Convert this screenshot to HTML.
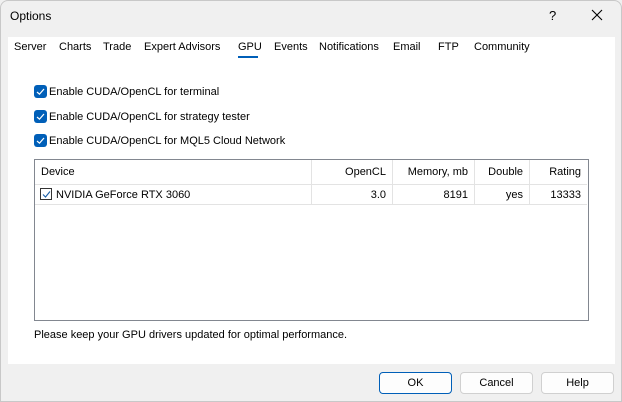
<!DOCTYPE html>
<html><head><style>
*{margin:0;padding:0;box-sizing:border-box}
body{width:622px;height:402px;overflow:hidden;background:#f0f0f0;font-family:"Liberation Sans",sans-serif;font-size:11px;color:#000;position:relative}
.abs{position:absolute;white-space:nowrap}
.win{position:absolute;left:0;top:0;width:622px;height:402px;border:1px solid #c8c8c8;border-radius:8px 8px 0 0;background:#f0f0f0}
.panel{position:absolute;left:8px;top:37px;width:607px;height:327px;background:#fff}
.cb{position:absolute;width:13px;height:13px;background:#005fb8;border-radius:3px}
.cb svg{position:absolute;left:2px;top:2px}
.list{position:absolute;left:34px;top:159px;width:555px;height:162px;border:1px solid #828790;background:#fff}
.hdr{position:absolute;top:0;height:24px;border-right:1px solid #e3e3e3;line-height:24px;padding:0 6px}
.row{position:absolute;top:24px;height:21px;line-height:21px;border-right:1px solid #e3e3e3;border-top:1px solid #e3e3e3;border-bottom:1px solid #e3e3e3;padding:0 6px}
.btn{position:absolute;top:372px;width:73px;height:22px;border:1px solid #d0d0d0;border-radius:4px;background:#fdfdfd;text-align:center;line-height:20px}
</style></head><body>
<div class="win"></div>
<div class="abs" style="left:10px;top:9px;font-size:12px">Options</div>
<div class="abs" style="left:549px;top:8px;font-size:13px">?</div>
<svg class="abs" style="left:591px;top:9px" width="12" height="12"><path d="M1 1L11 11M11 1L1 11" stroke="#000" stroke-width="1.1"/></svg>
<div class="panel"></div>
<div class="abs" style="left:14px;top:41px">Server</div>
<div class="abs" style="left:59px;top:41px">Charts</div>
<div class="abs" style="left:103px;top:41px">Trade</div>
<div class="abs" style="left:144px;top:41px">Expert Advisors</div>
<div class="abs" style="left:238px;top:41px">GPU</div>
<div class="abs" style="left:238px;top:56px;width:20px;height:2px;background:#005fb8"></div>
<div class="abs" style="left:274px;top:41px">Events</div>
<div class="abs" style="left:319px;top:41px">Notifications</div>
<div class="abs" style="left:393px;top:41px">Email</div>
<div class="abs" style="left:438px;top:41px">FTP</div>
<div class="abs" style="left:474px;top:41px">Community</div>

<div class="cb" style="left:34px;top:85px"><svg width="9" height="9"><path d="M1 5L3.5 7.2L8 2" stroke="#fff" stroke-width="1.2" fill="none"/></svg></div>
<div class="abs" style="left:49px;top:86px">Enable CUDA/OpenCL for terminal</div>
<div class="cb" style="left:34px;top:110px"><svg width="9" height="9"><path d="M1 5L3.5 7.2L8 2" stroke="#fff" stroke-width="1.2" fill="none"/></svg></div>
<div class="abs" style="left:49px;top:111px">Enable CUDA/OpenCL for strategy tester</div>
<div class="cb" style="left:34px;top:134px"><svg width="9" height="9"><path d="M1 5L3.5 7.2L8 2" stroke="#fff" stroke-width="1.2" fill="none"/></svg></div>
<div class="abs" style="left:49px;top:135px">Enable CUDA/OpenCL for MQL5 Cloud Network</div>

<div class="list">
<div class="hdr" style="left:0;width:277px">Device</div>
<div class="hdr" style="left:277px;width:81px;text-align:right">OpenCL</div>
<div class="hdr" style="left:358px;width:82px;text-align:right">Memory, mb</div>
<div class="hdr" style="left:440px;width:55px;text-align:right">Double</div>
<div class="hdr" style="left:495px;width:57px;text-align:right;border-right:none">Rating</div>
<div class="row" style="left:0;width:277px;padding-left:21px">NVIDIA GeForce RTX 3060</div>
<div class="abs" style="left:5px;top:28px;width:12px;height:12px;border:1px solid #333;background:#fff"><svg style="position:absolute;left:1px;top:1px" width="9" height="9"><path d="M1 4.5L3.5 7L8 1.5" stroke="#1a5fa8" stroke-width="1.1" fill="none"/></svg></div>
<div class="row" style="left:277px;width:81px;text-align:right">3.0</div>
<div class="row" style="left:358px;width:82px;text-align:right">8191</div>
<div class="row" style="left:440px;width:55px;text-align:right">yes</div>
<div class="row" style="left:495px;width:57px;text-align:right;border-right:none">13333</div>
</div>
<div class="abs" style="left:34px;top:329px">Please keep your GPU drivers updated for optimal performance.</div>

<div class="btn" style="left:379px;border:1px solid #005fb8">OK</div>
<div class="btn" style="left:460px">Cancel</div>
<div class="btn" style="left:541px">Help</div>
</body></html>
